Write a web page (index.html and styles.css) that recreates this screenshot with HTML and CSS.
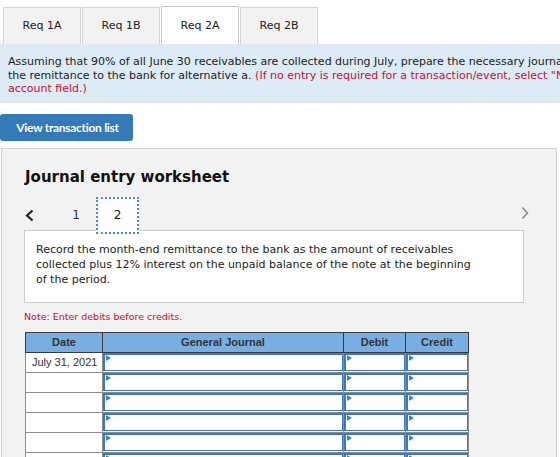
FILE: index.html
```html
<!DOCTYPE html>
<html lang="en">
<head>
  <meta charset="utf-8">
  <title>Req 2A - Journal entry worksheet</title>
<link rel="stylesheet" href="styles.css">
</head>

<body>
<div class="page">

  <div class="tabs">
    <div class="tab">Req 1A</div>
    <div class="tab">Req 1B</div>
    <div class="tab active">Req 2A</div>
    <div class="tab">Req 2B</div>
  </div>

  <div class="question">
    <p>Assuming that 90% of all June 30 receivables are collected during July, prepare the necessary journal entry to record<br>
    the remittance to the bank for alternative a. <span class="hint">(If no entry is required for a transaction/event, select "No journal entry required" in the first<br>
    account field.)</span></p>
  </div>

  <div class="listBar">
    <button class="listButton">View transaction list</button>
  </div>

  <div class="worksheet">
    <h2>Journal entry worksheet</h2>

    <div class="pager">
      <svg class="arrow" width="9" height="13" viewBox="0 0 9 13"><polyline points="7.5,1.5 2,6.5 7.5,11.5" fill="none" stroke="#222" stroke-width="2.2"/></svg>
      <span class="pageNum">1</span>
      <span class="pageNum current">2</span>
      <svg class="arrow next" width="8" height="14" viewBox="0 0 8 14"><polyline points="1.5,1.5 6.5,7 1.5,12.5" fill="none" stroke="#8a8a8a" stroke-width="1.6"/></svg>
    </div>

    <div class="task">
      <p>Record the month-end remittance to the bank as the amount of receivables collected plus 12% interest on the unpaid balance of the note at the beginning of the period.</p>
    </div>

    <p class="note">Note: Enter debits before credits.</p>

    <table class="journal">
      <tr>
        <th class="colDate">Date</th>
        <th class="colAccount">General Journal</th>
        <th class="colDebit">Debit</th>
        <th class="colCredit">Credit</th>
      </tr>
      <tr>
        <td class="date">July 31, 2021</td>
        <td class="field"><div></div></td>
        <td class="field"><div></div></td>
        <td class="field"><div></div></td>
      </tr>
      <tr>
        <td class="date"></td>
        <td class="field"><div></div></td>
        <td class="field"><div></div></td>
        <td class="field"><div></div></td>
      </tr>
      <tr>
        <td class="date"></td>
        <td class="field"><div></div></td>
        <td class="field"><div></div></td>
        <td class="field"><div></div></td>
      </tr>
      <tr>
        <td class="date"></td>
        <td class="field"><div></div></td>
        <td class="field"><div></div></td>
        <td class="field"><div></div></td>
      </tr>
      <tr>
        <td class="date"></td>
        <td class="field"><div></div></td>
        <td class="field"><div></div></td>
        <td class="field"><div></div></td>
      </tr>
      <tr>
        <td class="date"></td>
        <td class="field"><div></div></td>
        <td class="field"><div></div></td>
        <td class="field"><div></div></td>
      </tr>
    </table>
  </div>

</div>
</body>
</html>
```

FILE: styles.css
```css
html, body {
  margin: 0;
  overflow: hidden;
  background: white;
}

body {
  font-family: "DejaVu Sans", Verdana, sans-serif;
  font-size: 11px;
  color: #222;
}

.page {
  width: 560px;
  overflow: hidden;
}

/* tabs */
.tabs {
  display: flex;
  gap: 1px;
  padding: 7px 0 0 3px;
  height: 44px;
  box-sizing: border-box;
}

.tab {
  width: 78px;
  box-sizing: border-box;
  border: solid 1px #d4d4d4;
  border-bottom: none;
  background: #f2f2f2;
  display: flex;
  align-items: center;
  justify-content: center;
  padding-bottom: 1px;
}

.tab.active {
  background: white;
  border-color: #c8c8c8;
  margin-top: -1px;
}

/* question banner */
.question {
  width: 900px;
  background: #dcebf6;
  padding: 11px 8px 7px 8px;
}

.question p {
  margin: 0;
  line-height: 13.5px;
  white-space: nowrap;
}

.hint {
  color: #c9102f;
}

/* transaction list button */
.listBar {
  padding: 11px 0 7px 0;
  height: 27px;
}

.listButton {
  font-family: Lato, "Open Sans", sans-serif;
  font-weight: bold;
  font-size: 12px;
  color: white;
  background: #3479b8;
  border: none;
  border-radius: 3px;
  height: 27px;
  width: 133px;
  padding: 0 0 0 2px;
  letter-spacing: -0.3px;
}

/* worksheet */
.worksheet {
  width: 556px;
  height: 320px;
  box-sizing: border-box;
  margin-left: 1px;
  border: solid 1px #d0d0d0;
  border-bottom: none;
  background: #f2f2f2;
  padding: 0 0 0 22px;
}

.worksheet h2 {
  font-size: 15px;
  margin: 19px 0 0 1px;
  color: #111;
}

.pager {
  display: flex;
  align-items: center;
  height: 37px;
  margin-top: 11px;
  font-size: 12px;
  color: #333;
}

.arrow {
  margin-left: 1px;
}

.arrow.next {
  margin-left: auto;
  margin-right: 27px;
  margin-top: -4px;
}

.pageNum {
  width: 30px;
  height: 37px;
  box-sizing: border-box;
  display: flex;
  align-items: center;
  justify-content: center;
  margin-left: 27px;
}

.pageNum.current {
  width: 43px;
  margin-left: 5px;
  background: white;
  border: dotted 2px #4a8ad0;
  color: #222;
}

.task {
  width: 500px;
  box-sizing: border-box;
  margin-top: -4px;
  background: white;
  border: solid 1px #cccccc;
  padding: 11px 10px 15px 11px;
}

.task p {
  margin: 0;
  width: 445px;
  line-height: 15px;
}

.note {
  font-size: 9.5px;
  color: #c9102f;
  margin: 8px 0 0 0;
}

/* journal table */
.journal {
  border-collapse: collapse;
  margin-top: 10px;
  margin-left: 1px;
  font-family: "Liberation Sans", Arial, sans-serif;
  font-size: 11px;
  color: #333;
}

.journal th {
  background: #78aee1;
  border: solid 1px #3a3a3a;
  height: 19px;
  padding: 0;
  font-weight: bold;
}

.colDate { width: 76px; }
.colAccount { width: 240px; }
.colDebit { width: 61px; }
.colCredit { width: 62px; }

.journal td {
  border: solid 1px #8c8c8c;
  height: 19px;
  padding: 0;
  background: white;
}

.journal td.date {
  padding-left: 6px;
  text-align: left;
}

.journal td.field {
  position: relative;
}

.journal td.field div {
  border: solid 2px #4277b0;
  border-right-width: 1px;
  border-bottom-width: 1px;
  height: 15px;
}

.journal td.field div::before {
  content: "";
  position: absolute;
  top: 2px;
  left: 3px;
  border-left: solid 5px #2f86d8;
  border-top: solid 3px transparent;
  border-bottom: solid 3px transparent;
}
```
